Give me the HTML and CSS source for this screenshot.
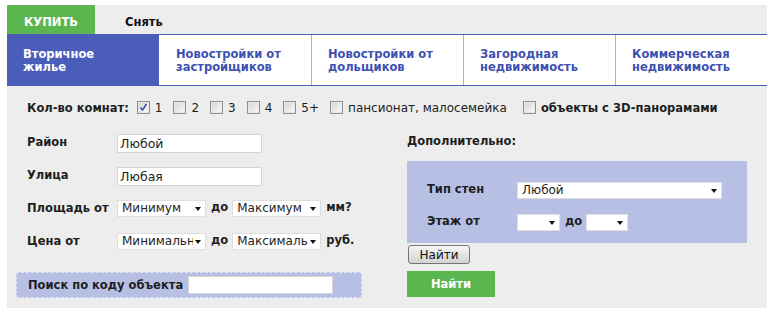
FILE: index.html
```html
<!DOCTYPE html>
<html lang="ru">
<head>
<meta charset="utf-8">
<title>Поиск недвижимости</title>
<link rel="stylesheet" href="styles.css">
</head>
<body>
<div class="wrap">
  <div class="deal">
    <span class="deal-buy">КУПИТЬ</span>
    <span class="deal-rent">Снять</span>
  </div>
  <div class="tabs">
    <div class="tab active">Вторичное<br>жилье</div>
    <div class="tab">Новостройки от<br>застройщиков</div>
    <div class="tab">Новостройки от<br>дольщиков</div>
    <div class="tab">Загородная<br>недвижимость</div>
    <div class="tab">Коммерческая<br>недвижимость</div>
  </div>
  <div class="rooms">
    <span class="rooms-title">Кол-во комнат:</span>
    <span class="opt"><span class="cb cb-on"><svg width="11" height="11" viewBox="0 0 11 11"><path d="M2.5 5.5 L4.5 8 L8.5 2" fill="none" stroke="#3a55b4" stroke-width="1.6"/></svg></span>1</span>
    <span class="opt"><span class="cb"></span>2</span>
    <span class="opt"><span class="cb"></span>3</span>
    <span class="opt"><span class="cb"></span>4</span>
    <span class="opt"><span class="cb"></span>5+</span>
    <span class="opt"><span class="cb"></span>пансионат, малосемейка</span>
    <span class="opt opt-last"><span class="cb"></span><b>объекты с 3D-панорамами</b></span>
  </div>
  <div class="cols">
    <div class="col-left">
      <div class="row">
        <span class="lbl">Район</span>
        <div class="ctl"><span class="inp">Любой</span></div>
      </div>
      <div class="row">
        <span class="lbl">Улица</span>
        <div class="ctl"><span class="inp">Любая</span></div>
      </div>
      <div class="row">
        <span class="lbl">Площадь от</span>
        <div class="ctl">
          <span class="sel w89"><span class="sel-val">Минимум</span><span class="arr"></span></span>
          <b class="sep">до</b>
          <span class="sel w89"><span class="sel-val">Максимум</span><span class="arr"></span></span>
          <b class="unit">мм?</b>
        </div>
      </div>
      <div class="row">
        <span class="lbl">Цена от</span>
        <div class="ctl">
          <span class="sel w89"><span class="sel-val">Минимальн</span><span class="arr"></span></span>
          <b class="sep">до</b>
          <span class="sel w89"><span class="sel-val">Максималь</span><span class="arr"></span></span>
          <b class="unit">руб.</b>
        </div>
      </div>
      <div class="code">
        <b class="code-lbl">Поиск по коду объекта</b>
        <span class="inp code-inp"></span>
      </div>
    </div>
    <div class="col-right">
      <div class="extra-title">Дополнительно:</div>
      <div class="extra">
        <div class="xrow">
          <span class="lbl">Тип стен</span>
          <span class="sel w205"><span class="sel-val">Любой</span><span class="arr"></span></span>
        </div>
        <div class="xrow">
          <span class="lbl">Этаж от</span>
          <div class="ctl">
            <span class="sel w43"><span class="sel-val"></span><span class="arr"></span></span>
            <b class="sep">до</b>
            <span class="sel w42"><span class="sel-val"></span><span class="arr"></span></span>
          </div>
        </div>
      </div>
      <button class="btn-gray" type="button">Найти</button>
      <button class="btn-green" type="button">Найти</button>
    </div>
  </div>
</div>
</body>
</html>
```
FILE: styles.css
```css
* { box-sizing: border-box; }
body {
  margin: 0;
  background: #fff;
  font-family: "DejaVu Sans", Verdana, sans-serif;
  color: #1e1e1e;
}
.wrap {
  margin: 5px 0 0 7px;
  width: 760px;
  height: 303px;
  background: #ededed;
}
.deal {
  display: flex;
  height: 29px;
}
.deal-buy {
  width: 88px;
  background: #5cb650;
  color: #fff;
  font-weight: bold;
  font-size: 11.5px;
  display: flex;
  align-items: center;
  justify-content: center;
  padding-top: 4px;
}
.deal-rent {
  margin-left: 30px;
  font-weight: bold;
  font-size: 11.5px;
  color: #111;
  display: flex;
  align-items: center;
  padding-top: 4px;
}
.tabs {
  display: grid;
  grid-template-columns: repeat(5, 152px);
  height: 52px;
  background: #fff;
  border-top: 1px solid #4a5eb9;
  border-bottom: 1px solid #4a5eb9;
}
.tab {
  padding: 13px 0 0 16px;
  font-weight: bold;
  font-size: 11.5px;
  line-height: 13px;
  color: #3d51b0;
  border-left: 1px solid #b4b4b8;
}
.tab.active {
  background: #4a5eb9;
  color: #fff;
  border-left: none;
}
.tab.active + .tab { border-left: none; padding-left: 17px; }
.rooms {
  display: flex;
  align-items: center;
  height: 13px;
  margin-top: 15px;
  padding-left: 20px;
  font-size: 12px;
  gap: 11px;
}
.rooms-title {
  font-weight: bold;
  font-size: 11.5px;
  margin-right: -3px;
}
.opt {
  display: flex;
  align-items: center;
}
.opt-last { margin-left: 5px; }
.opt b { font-size: 11.5px; }
.cb {
  width: 13px;
  height: 13px;
  margin-right: 5px;
  border: 1px solid #8c8f94;
  background: linear-gradient(135deg, #d4d4d4 0%, #f4f4f4 80%, #fff 100%);
  box-shadow: inset 0 0 0 1px #e9e9e9;
  display: flex;
  align-items: center;
  justify-content: center;
}
.cols {
  display: grid;
  grid-template-columns: 400px 360px;
}
.col-left { padding: 20px 0 0 9px; }
.row {
  display: grid;
  grid-template-columns: 90px auto;
  height: 33px;
  padding-left: 11px;
}
.lbl {
  font-weight: bold;
  font-size: 11.5px;
  line-height: 14px;
  padding-top: 1px;
}
.ctl {
  display: flex;
  align-items: flex-start;
}
.inp {
  display: block;
  width: 145px;
  height: 19px;
  background: #fff;
  border: 1px solid #d6d6d6;
  font-size: 12.5px;
  line-height: 17px;
  padding-left: 2px;
}
.sel {
  display: flex;
  align-items: center;
  height: 17px;
  background: #fff;
  border: 1px solid #dedede;
  font-size: 12px;
  padding-left: 4px;
}
.sel-val {
  flex: 1;
  overflow: hidden;
  white-space: nowrap;
  line-height: 15px;
}
.arr {
  width: 0;
  height: 0;
  border-left: 3px solid transparent;
  border-right: 3px solid transparent;
  border-top: 4px solid #111;
  margin: 1px 4px 0 2px;
  flex: none;
}
.w89 { width: 89px; }
.w205 { width: 205px; }
.w43 { width: 43px; }
.w42 { width: 42px; }
.sep {
  font-size: 11.5px;
  line-height: 15px;
  margin: 0 4px 0 5px;
}
.unit {
  font-size: 11.5px;
  line-height: 15px;
  margin-left: 5px;
}
.code {
  display: flex;
  align-items: center;
  margin-top: 6px;
  width: 346px;
  height: 26px;
  background: #b7c0e4;
  border: 1px dashed #e2e5f1;
  padding-left: 11px;
}
.code-lbl { font-size: 11.5px; margin-right: 5px; }
.code-inp { height: 18px; }
.extra-title {
  font-weight: bold;
  font-size: 11.5px;
  line-height: 14px;
  margin-top: 20px;
  height: 27px;
}
.extra {
  width: 340px;
  height: 82px;
  background: #b7c0e4;
  padding: 21px 0 0 20px;
}
.xrow {
  display: grid;
  grid-template-columns: 90px auto;
  height: 32px;
}
.xrow .lbl { padding-top: 0; }
.btn-gray {
  display: block;
  margin: 2px 0 0 1px;
  width: 62px;
  height: 19px;
  padding: 0;
  font-family: "DejaVu Sans", Verdana, sans-serif;
  font-size: 12px;
  color: #111;
  border: 1px solid #777;
  border-radius: 3px;
  background: linear-gradient(#f6f6f6, #e4e4e4 50%, #d2d2d2);
}
.btn-green {
  display: block;
  margin-top: 7px;
  width: 88px;
  height: 26px;
  padding: 0;
  border: none;
  background: #5cb650;
  color: #fff;
  font-family: "DejaVu Sans", Verdana, sans-serif;
  font-weight: bold;
  font-size: 11.5px;
}
```
